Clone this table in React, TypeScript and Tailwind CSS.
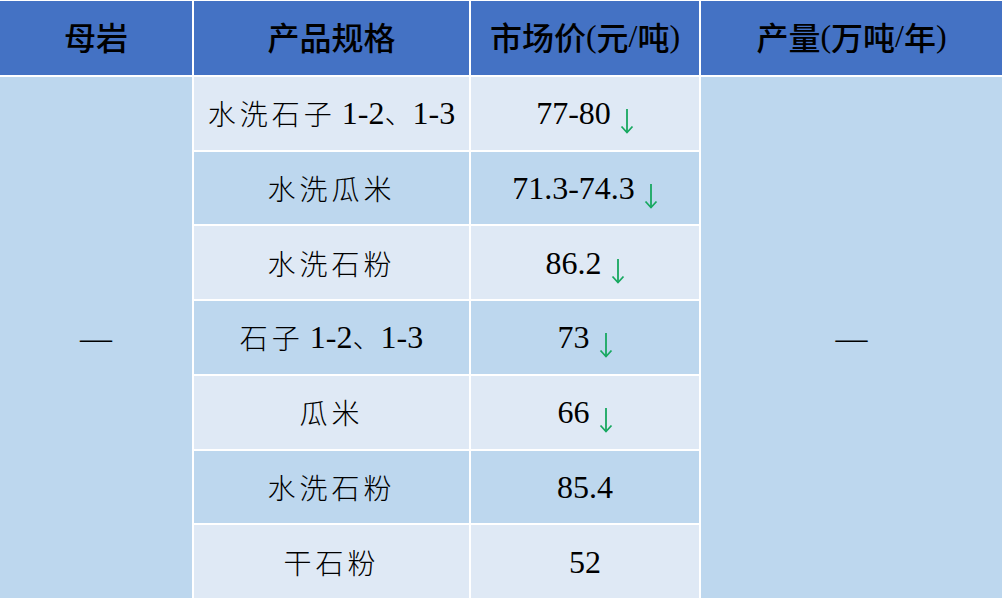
const rows = [
  { name: "水洗石子", extra: true, price: "77-80", down: true },
  { name: "水洗瓜米", extra: false, price: "71.3-74.3", down: true },
  { name: "水洗石粉", extra: false, price: "86.2", down: true },
  { name: "石子", extra: true, price: "73", down: true },
  { name: "瓜米", extra: false, price: "66", down: true },
  { name: "水洗石粉", extra: false, price: "85.4", down: false },
  { name: "干石粉", extra: false, price: "52", down: false },
];

function Arrow() {
  return (
    <svg width="14" height="26" viewBox="0 0 14 26" className="ml-[9px] mt-[16px]" fill="none" stroke="#17a860" strokeWidth="1.8">
      <path d="M7 1 V24.5" />
      <path d="M1.5 18.5 L7 24.5 L12.5 18.5" />
    </svg>
  );
}

function Head({ cn, rest }: { cn: string; rest?: string[] }) {
  return (
    <div className="flex items-center justify-center bg-[#4472c4] pb-[5px] text-[32px] text-black">
      <span className="font-['Noto_Sans_CJK_SC',sans-serif] font-medium">{cn}</span>
      {rest && (
        <>
          <span className="font-['Liberation_Serif',serif]">(</span>
          <span className="font-['Noto_Sans_CJK_SC',sans-serif] font-medium">{rest[0]}</span>
          <span className="font-['Liberation_Serif',serif]">/</span>
          <span className="font-['Noto_Sans_CJK_SC',sans-serif] font-medium">{rest[1]}</span>
          <span className="font-['Liberation_Serif',serif]">)</span>
        </>
      )}
    </div>
  );
}

export default function App() {
  return (
    <div className="grid h-[598px] w-[1002px] grid-cols-[192px_275px_228px_301px] grid-rows-[74px_repeat(7,1fr)] gap-[2px] bg-white pt-px">
      <Head cn="母岩" />
      <Head cn="产品规格" />
      <Head cn="市场价" rest={["元", "吨"]} />
      <Head cn="产量" rest={["万吨", "年"]} />

      <div className="col-start-1 row-start-2 row-span-7 flex items-center justify-center bg-[#bdd7ee] font-['Liberation_Serif',serif] text-[32px] text-black">
        —
      </div>

      {rows.map((r, i) => {
        const bg = i % 2 === 0 ? "bg-[#dfe9f5]" : "bg-[#bdd7ee]";
        return [
          <div key={"n" + i} className={"col-start-2 flex items-center justify-center text-black " + bg} style={{ gridRow: i + 2 }}>
            <span className="font-['Noto_Sans_CJK_SC',sans-serif] text-[28px] font-light tracking-[4px]">{r.name}</span>
            {r.extra && (
              <span className="ml-[6px] flex items-baseline">
                <span className="font-['Liberation_Serif',serif] text-[32px]">1-2</span>
                <span className="font-['Noto_Sans_CJK_SC',sans-serif] text-[28px] font-light">、</span>
                <span className="font-['Liberation_Serif',serif] text-[32px]">1-3</span>
              </span>
            )}
          </div>,
          <div key={"p" + i} className={"col-start-3 flex items-center justify-center text-black " + bg} style={{ gridRow: i + 2 }}>
            <span className="font-['Liberation_Serif',serif] text-[32px]">{r.price}</span>
            {r.down && <Arrow />}
          </div>,
        ];
      })}

      <div className="col-start-4 row-start-2 row-span-7 flex items-center justify-center bg-[#bdd7ee] font-['Liberation_Serif',serif] text-[32px] text-black">
        —
      </div>
    </div>
  );
}
